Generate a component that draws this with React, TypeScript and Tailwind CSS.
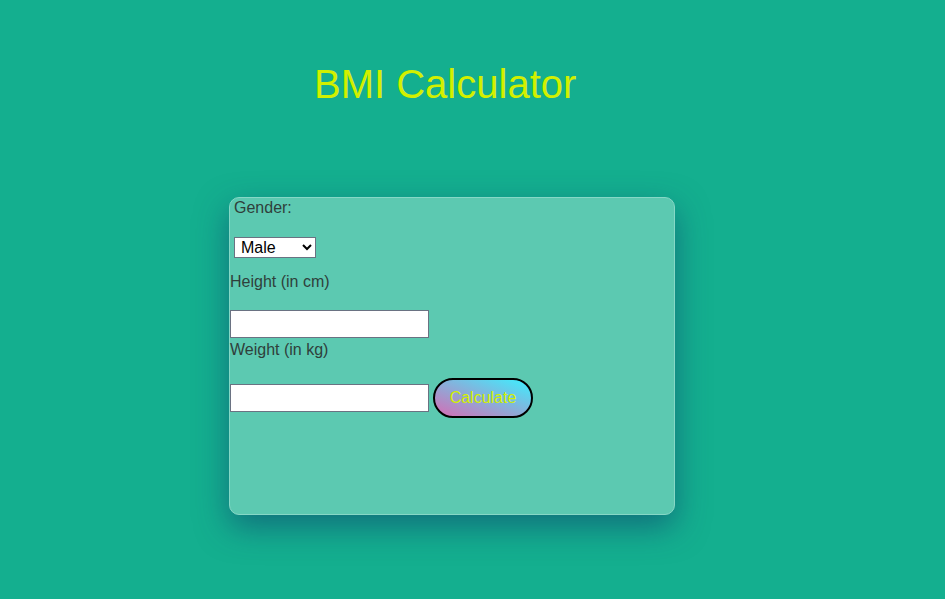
import { useState } from 'react';

const App = () => {
  const [gender, setGender] = useState('male');
  const [height, setHeight] = useState('');
  const [weight, setWeight] = useState('');

  return (
    <div className="min-h-[599px] bg-[#14af8f] pt-[61px] font-['Liberation_Sans',Arial,sans-serif] text-[16px]">
      <h1 className="ml-[314px] text-[40px] leading-[46px] text-[#d2f000]">BMI Calculator</h1>

      <div className="ml-[229px] mt-[90px] h-[318px] w-[446px] rounded-[10px] border border-[#86d8c6] bg-[#5cc9b1] shadow-[0_12px_32px_rgba(15,60,110,0.55)] text-[#2f3f3b]">
        <div className="pl-1 pt-px">
          <label className="block leading-[18px]">Gender:</label>
          <select
            value={gender}
            onChange={(e) => setGender(e.target.value)}
            className="mt-[20px] h-[21px] w-[82px] border border-gray-500 bg-white pl-[2px] text-[16px] leading-[18px] text-black"
          >
            <option value="male">Male</option>
            <option value="female">Female</option>
          </select>
        </div>

        <label className="mt-[13px] block leading-[18px]">Height (in cm)</label>
        <input
          type="text"
          value={height}
          onChange={(e) => setHeight(e.target.value)}
          className="mt-[19px] block h-[28px] w-[199px] border border-gray-500 bg-white"
        />

        <label className="mt-[3px] block leading-[18px]">Weight (in kg)</label>
        <div className="mt-[19px] flex items-center gap-1">
          <input
            type="text"
            value={weight}
            onChange={(e) => setWeight(e.target.value)}
            className="h-[28px] w-[199px] border border-gray-500 bg-white"
          />
          <button className="h-[40px] w-[100px] rounded-full border-2 border-black bg-[linear-gradient(to_top_right,#d66cb4,#3cf0ff)] text-[16px] text-[#d2f000]">
            Calculate
          </button>
        </div>
      </div>
    </div>
  );
};

export default App;
